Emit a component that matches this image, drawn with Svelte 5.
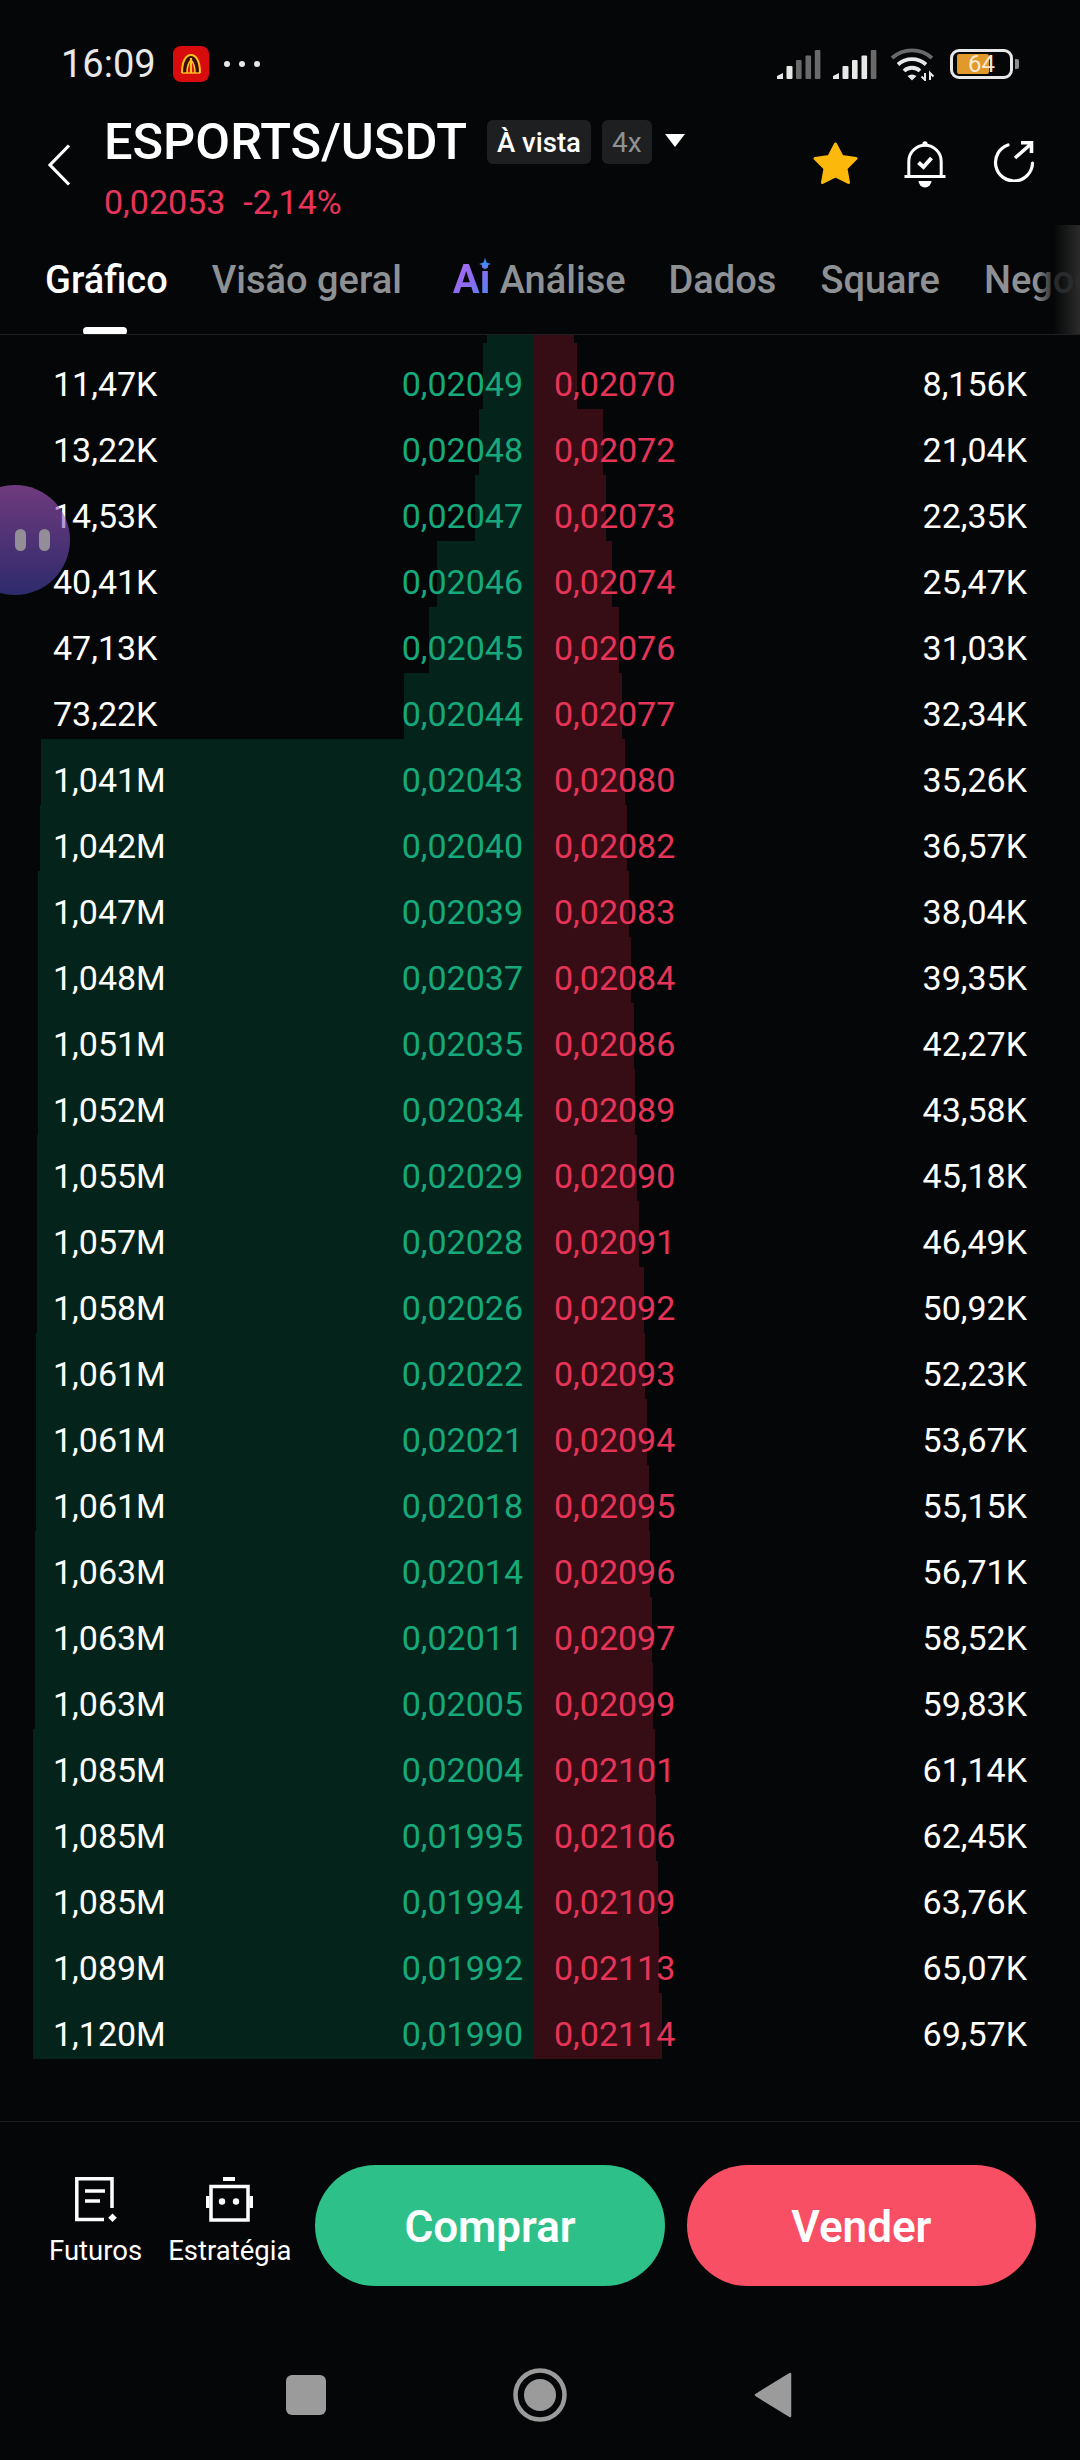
<script>
  const midX = 534;

  const rows = [
    ['11,47K', '0,02049', '0,02070', '8,156K', 483, 577],
    ['13,22K', '0,02048', '0,02072', '21,04K', 479, 603],
    ['14,53K', '0,02047', '0,02073', '22,35K', 475, 606],
    ['40,41K', '0,02046', '0,02074', '25,47K', 437, 612],
    ['47,13K', '0,02045', '0,02076', '31,03K', 429, 619],
    ['73,22K', '0,02044', '0,02077', '32,34K', 404, 622],
    ['1,041M', '0,02043', '0,02080', '35,26K', 41, 625],
    ['1,042M', '0,02040', '0,02082', '36,57K', 40, 627],
    ['1,047M', '0,02039', '0,02083', '38,04K', 38, 629],
    ['1,048M', '0,02037', '0,02084', '39,35K', 38, 631],
    ['1,051M', '0,02035', '0,02086', '42,27K', 38, 634],
    ['1,052M', '0,02034', '0,02089', '43,58K', 38, 635],
    ['1,055M', '0,02029', '0,02090', '45,18K', 37, 637],
    ['1,057M', '0,02028', '0,02091', '46,49K', 37, 639],
    ['1,058M', '0,02026', '0,02092', '50,92K', 37, 644],
    ['1,061M', '0,02022', '0,02093', '52,23K', 36, 645],
    ['1,061M', '0,02021', '0,02094', '53,67K', 36, 647],
    ['1,061M', '0,02018', '0,02095', '55,15K', 36, 649],
    ['1,063M', '0,02014', '0,02096', '56,71K', 35, 650],
    ['1,063M', '0,02011', '0,02097', '58,52K', 35, 652],
    ['1,063M', '0,02005', '0,02099', '59,83K', 35, 653],
    ['1,085M', '0,02004', '0,02101', '61,14K', 33, 655],
    ['1,085M', '0,01995', '0,02106', '62,45K', 33, 656],
    ['1,085M', '0,01994', '0,02109', '63,76K', 33, 658],
    ['1,089M', '0,01992', '0,02113', '65,07K', 33, 659],
    ['1,120M', '0,01990', '0,02114', '69,57K', 33, 662]
  ];

  // the row scrolled partly out of view sits above the first one
  const depth = [[487, 574], ...rows.map((r) => [r[4], r[5]])];

  const tabs = ['Dados', 'Square', 'Negociar'];
</script>

<div class="screen">
  <div class="status">
    <span class="time">16:09</span>
    <svg class="app-icon" viewBox="0 0 36 36" width="36" height="36">
      <rect width="36" height="36" rx="8" fill="#d80c0c" />
      <path d="M9 27C9 15 13 9 18 9s9 6 9 18" fill="#3a0c06" stroke="#ffc21f" stroke-width="2" />
      <path d="M14 27c0-6 1-10 4-13 3 3 4 7 4 13" fill="#d80c0c" stroke="#ffc21f" stroke-width="1.600" />
      <path d="M18 12v15" stroke="#ffc21f" stroke-width="2.200" />
      <path d="M9 27h18" stroke="#ffc21f" stroke-width="1.400" />
    </svg>
    <span class="dots"><i></i><i></i><i></i></span>
    <svg class="signal" viewBox="0 0 100 29" width="100" height="29">
      <g fill="#6a6a6a">
        <path d="M0 29v-3l6-3v6z" fill="#e8e8e8" />
        <rect x="9.500" y="16" width="6" height="13" rx="1" fill="#e8e8e8" />
        <rect x="19" y="10" width="5.600" height="19" rx="1" />
        <rect x="28.500" y="5.500" width="5.600" height="23.500" rx="1" />
        <rect x="37.800" y="0" width="5.600" height="29" rx="1" />
      </g>
      <g fill="#e8e8e8">
        <path d="M56 29v-3l6-3v6z" />
        <rect x="65.500" y="16" width="6" height="13" rx="1" />
        <rect x="75" y="10" width="5.600" height="19" rx="1" />
        <rect x="84.500" y="5.500" width="5.600" height="23.500" rx="1" />
        <rect x="93.800" y="0" width="5.600" height="29" rx="1" fill="#6a6a6a" />
      </g>
    </svg>
    <svg class="wifi" viewBox="0 0 47 34" width="47" height="34">
      <g fill="none" stroke-width="3.800">
        <path d="M3 11A30 30 0 0 1 43 11" stroke="#6a6a6a" />
        <path d="M9 17.500A21 21 0 0 1 37 17.500" stroke="#e8e8e8" />
        <path d="M15 24A11.500 11.500 0 0 1 31 24" stroke="#e8e8e8" />
      </g>
      <path d="M18.500 29Q23 26 27.500 29L23 33.500z" fill="#e8e8e8" />
      <path d="M36 26v7l-3.500-3.500M41 33v-7l3.500 3.500" fill="none" stroke="#e8e8e8" stroke-width="2" />
    </svg>
    <div class="battery">
      <span class="battery-fill"></span>
      <span class="battery-text">64</span>
    </div>
    <span class="battery-cap"></span>
  </div>

  <header class="top">
    <svg class="back" viewBox="0 0 24 42" width="24" height="42">
      <path d="M22 1.500 3 21l19 19.500" fill="none" stroke="#fff" stroke-width="3.200" />
    </svg>
    <div class="pair">
      <div class="pair-line">
        <h1>ESPORTS/USDT</h1>
        <span class="badge">À vista</span>
        <span class="badge muted">4x</span>
        <span class="caret"></span>
      </div>
      <div class="quote"><span>0,02053</span><span>-2,14%</span></div>
    </div>
    <div class="actions">
      <svg viewBox="0 0 47 44" width="47" height="44">
        <path d="M23.500 3 30 15.500l14 2-10 10 2.500 14L23.500 35l-13 6.500 2.500-14-10-10 14-2z" fill="#fdb90b" stroke="#fdb90b" stroke-width="3" stroke-linejoin="round" />
      </svg>
      <svg viewBox="0 0 42 47" width="42" height="47">
        <circle cx="21" cy="2.800" r="2.600" fill="#fff" />
        <path d="M4.800 35V20.500a16.200 16.200 0 0 1 32.400 0V35" fill="none" stroke="#fff" stroke-width="3" />
        <path d="M0.500 35.500h41" stroke="#fff" stroke-width="3" />
        <path d="M14.500 40h13a6.500 6.500 0 0 1-13 0z" fill="#fff" />
        <path d="M14.500 21.500l5 4.500 8-9" fill="none" stroke="#fff" stroke-width="4" />
      </svg>
      <svg class="share" viewBox="0 0 42 41" width="42" height="41">
        <path d="M15 4A18.500 18.500 0 1 0 39.500 22" fill="none" stroke="#fff" stroke-width="3.200" stroke-linecap="round" />
        <path d="M22 17 38.500 2.500M28 1.800h10.500V12" fill="none" stroke="#fff" stroke-width="3.600" />
      </svg>
    </div>
  </header>

  <nav class="tabs">
    <span class="tab active">Gráfico<i class="underline"></i></span>
    <span class="tab">Visão geral</span>
    <span class="tab ai-tab">
      <span class="ai">Ai</span>
      <svg class="spark" viewBox="0 0 12 12" width="12" height="12">
        <path d="M6 0l1.600 4.400L12 6 7.600 7.600 6 12 4.400 7.600 0 6l4.400-1.600z" fill="#3f8cf2" />
      </svg>
      Análise
    </span>
    {#each tabs as tab}
      <span class="tab">{tab}</span>
    {/each}
    <span class="fade"></span>
  </nav>

  <section class="book">
    <div class="depth">
      {#each depth as [bid, ask]}
        <div class="depth-row">
          <div class="depth-bid"><i style="width:{midX - bid}px"></i></div>
          <div class="depth-ask"><i style="width:{ask - midX}px"></i></div>
        </div>
      {/each}
    </div>
    {#each rows as r}
      <div class="row">
        <span>{r[0]}</span>
        <span class="bid">{r[1]}</span>
        <span class="ask">{r[2]}</span>
        <span class="right">{r[3]}</span>
      </div>
    {/each}
    <div class="bubble"><i></i><i></i></div>
  </section>

  <footer class="bottom">
    <div class="link">
      <svg viewBox="0 0 42 45" width="42" height="45">
        <path d="M37 31V1.800H1.800V42.500H29" fill="none" stroke="#fff" stroke-width="3.500" />
        <path d="M10 14h20M10 24h15" stroke="#fff" stroke-width="3.500" />
        <path d="M37.500 36.500l4.300 4.300-4.300 4.200-4.300-4.200z" fill="#fff" />
      </svg>
      <span>Futuros</span>
    </div>
    <div class="link">
      <svg viewBox="0 0 47 45" width="47" height="45">
        <path d="M17 2h12" stroke="#fff" stroke-width="4" />
        <rect x="5" y="9.500" width="37" height="33.500" fill="none" stroke="#fff" stroke-width="3.500" />
        <rect x="0" y="19" width="3.500" height="12" fill="#fff" />
        <rect x="43.500" y="19" width="3.500" height="12" fill="#fff" />
        <circle cx="16" cy="24.500" r="3.200" fill="#fff" />
        <circle cx="30" cy="24.500" r="3.200" fill="#fff" />
      </svg>
      <span>Estratégia</span>
    </div>
    <button class="buy">Comprar</button>
    <button class="sell">Vender</button>
  </footer>

  <div class="system-nav">
    <span class="nav-square"></span>
    <svg viewBox="0 0 54 54" width="54" height="54">
      <circle cx="27" cy="27" r="24.500" fill="none" stroke="#9b9b9b" stroke-width="4.500" />
      <circle cx="27" cy="27" r="16" fill="#9b9b9b" />
    </svg>
    <svg viewBox="0 0 38 46" width="38" height="46">
      <path d="M36 2v42L2 23z" fill="#9b9b9b" stroke="#9b9b9b" stroke-width="2.500" stroke-linejoin="round" />
    </svg>
  </div>
</div>

<style>
  :global(body) {
    background: #050607;
  }

  .screen {
    position: relative;
    display: flex;
    flex-direction: column;
    width: 1080px;
    height: 2460px;
    overflow: hidden;
    background: #050607;
    color: #fff;
    font-family: Roboto, "Liberation Sans", sans-serif;
  }

  .status {
    display: flex;
    align-items: center;
    height: 108px;
    padding: 20px 0 0 61px;
    box-sizing: border-box;
    color: #e8e8e8;
  }

  .time {
    font-size: 38px;
    line-height: 44px;
    width: 112px;
  }

  .dots {
    display: flex;
    gap: 9px;
    margin-left: 15px;
  }

  .dots i {
    width: 6px;
    height: 6px;
    border-radius: 50%;
    background: #e8e8e8;
  }

  .signal {
    margin-left: auto;
  }

  .wifi {
    margin: 0 14px 0 12px;
  }

  .battery {
    position: relative;
    width: 63px;
    height: 30px;
    box-sizing: border-box;
    border: 3px solid #e8e8e8;
    border-radius: 9px;
  }

  .battery-fill {
    position: absolute;
    left: 4px;
    top: 2px;
    width: 32px;
    height: 20px;
    background: #e0992a;
    border-radius: 2px;
  }

  .battery-text {
    position: absolute;
    left: 15px;
    top: -2px;
    font-size: 24px;
    line-height: 28px;
    color: #f6ead6;
  }

  .battery-cap {
    width: 4px;
    height: 10px;
    margin: 0 61px 0 2px;
    border-radius: 0 2px 2px 0;
    background: #8c8c8c;
  }

  .top {
    display: flex;
    height: 117px;
  }

  .back {
    margin: 36px 0 0 47px;
  }

  .pair {
    margin-left: 33px;
  }

  .pair-line {
    display: flex;
    align-items: center;
    height: 68px;
  }

  h1 {
    margin: 0 20px 0 0;
    font-size: 50.500px;
    font-weight: 500;
    line-height: 68px;
    white-space: nowrap;
  }

  .badge {
    display: flex;
    align-items: center;
    height: 44px;
    padding: 0 10px;
    border-radius: 6px;
    background: #1e1f21;
    font-size: 27.500px;
    font-weight: 500;
    white-space: nowrap;
    margin-right: 11px;
  }

  .badge.muted {
    color: #8f9194;
    font-weight: 400;
    font-size: 28px;
  }

  .caret {
    width: 0;
    height: 0;
    margin: -4px 0 0 2px;
    border-left: 10px solid transparent;
    border-right: 10px solid transparent;
    border-top: 13px solid #fff;
  }

  .quote {
    display: flex;
    gap: 18px;
    margin-top: 6px;
    font-size: 34px;
    line-height: 40px;
    color: #e8345a;
  }

  .actions {
    display: flex;
    align-items: flex-start;
    gap: 45px;
    margin: 33px 45px 0 auto;
  }

  .share {
    margin-left: 2px;
  }

  .tabs {
    position: relative;
    display: flex;
    align-items: flex-start;
    gap: 44px;
    height: 110px;
    padding: 32px 0 0 45px;
    box-sizing: border-box;
    overflow: hidden;
    border-bottom: 1px solid #1e1f21;
    white-space: nowrap;
    font-size: 38px;
    font-weight: 500;
    line-height: 46px;
    color: #8e9194;
  }

  .tab {
    position: relative;
    flex: none;
  }

  .tab.active {
    color: #fff;
  }

  .underline {
    position: absolute;
    left: 38px;
    top: 70px;
    width: 44px;
    height: 8px;
    border-radius: 4px;
    background: #fff;
  }

  .ai-tab {
    margin: 0 -1px 0 7px;
  }

  .ai {
    background: linear-gradient(135deg, #b86cf2, #8c6cf0 50%, #3f8cf2);
    -webkit-background-clip: text;
    background-clip: text;
    color: transparent;
    font-size: 40px;
    font-weight: 700;
  }

  .spark {
    position: absolute;
    left: 26px;
    top: 1px;
  }

  .fade {
    position: absolute;
    right: 0;
    top: 0;
    bottom: 0;
    width: 44px;
    background: linear-gradient(90deg, rgba(5, 6, 7, 0), rgba(5, 6, 7, 0.75) 40%, #2b2b2b);
  }

  .book {
    position: relative;
    height: 1786px;
    box-sizing: border-box;
    padding-top: 16px;
    overflow: hidden;
  }

  .depth {
    position: absolute;
    left: 0;
    right: 0;
    top: -58px;
  }

  .depth-row {
    display: flex;
    height: 66px;
  }

  .depth-bid {
    display: flex;
    justify-content: flex-end;
    width: 534px;
  }

  .depth-bid i {
    background: #04241b;
  }

  .depth-ask i {
    display: block;
    height: 100%;
    background: #360c15;
  }

  .row {
    position: relative;
    display: grid;
    grid-template-columns: 235px 235px 1fr auto;
    height: 66px;
    padding: 0 53px;
    font-size: 34px;
    line-height: 66px;
  }

  .bid {
    text-align: right;
    color: #17a97c;
  }

  .ask {
    padding-left: 31px;
    color: #e63459;
  }

  .bubble {
    position: absolute;
    left: -40px;
    top: 150px;
    display: flex;
    align-items: center;
    justify-content: flex-end;
    gap: 13px;
    width: 110px;
    height: 110px;
    padding-right: 20px;
    box-sizing: border-box;
    border-radius: 50%;
    opacity: 0.6;
    background: linear-gradient(180deg, #b45ecd, #4a44af);
  }

  .bubble i {
    width: 11px;
    height: 22px;
    border-radius: 6px;
    background: #f0e8f8;
  }

  .bottom {
    display: flex;
    align-items: flex-start;
    height: 165px;
    padding: 43px 44px 0 49px;
    box-sizing: border-box;
    border-top: 1px solid #1c1d1e;
  }

  .link {
    display: flex;
    flex-direction: column;
    align-items: center;
    margin-right: 26px;
    padding-top: 12px;
    font-size: 27.500px;
    line-height: 34px;
    gap: 12px;
  }

  .link + .link {
    margin-right: 24px;
  }

  button {
    flex: 1;
    height: 121px;
    padding: 2px 0 0;
    border: none;
    border-radius: 61px;
    color: #fff;
    font-family: inherit;
    font-size: 44px;
    font-weight: 600;
  }

  .buy {
    background: #2dc189;
    margin-right: 22px;
  }

  .sell {
    background: #f84f64;
  }

  .system-nav {
    display: flex;
    align-items: center;
    gap: 187px;
    height: 174px;
    padding: 44px 0 0 286px;
    box-sizing: border-box;
  }

  .nav-square {
    width: 40px;
    height: 40px;
    border-radius: 6px;
    background: #9b9b9b;
  }
</style>
